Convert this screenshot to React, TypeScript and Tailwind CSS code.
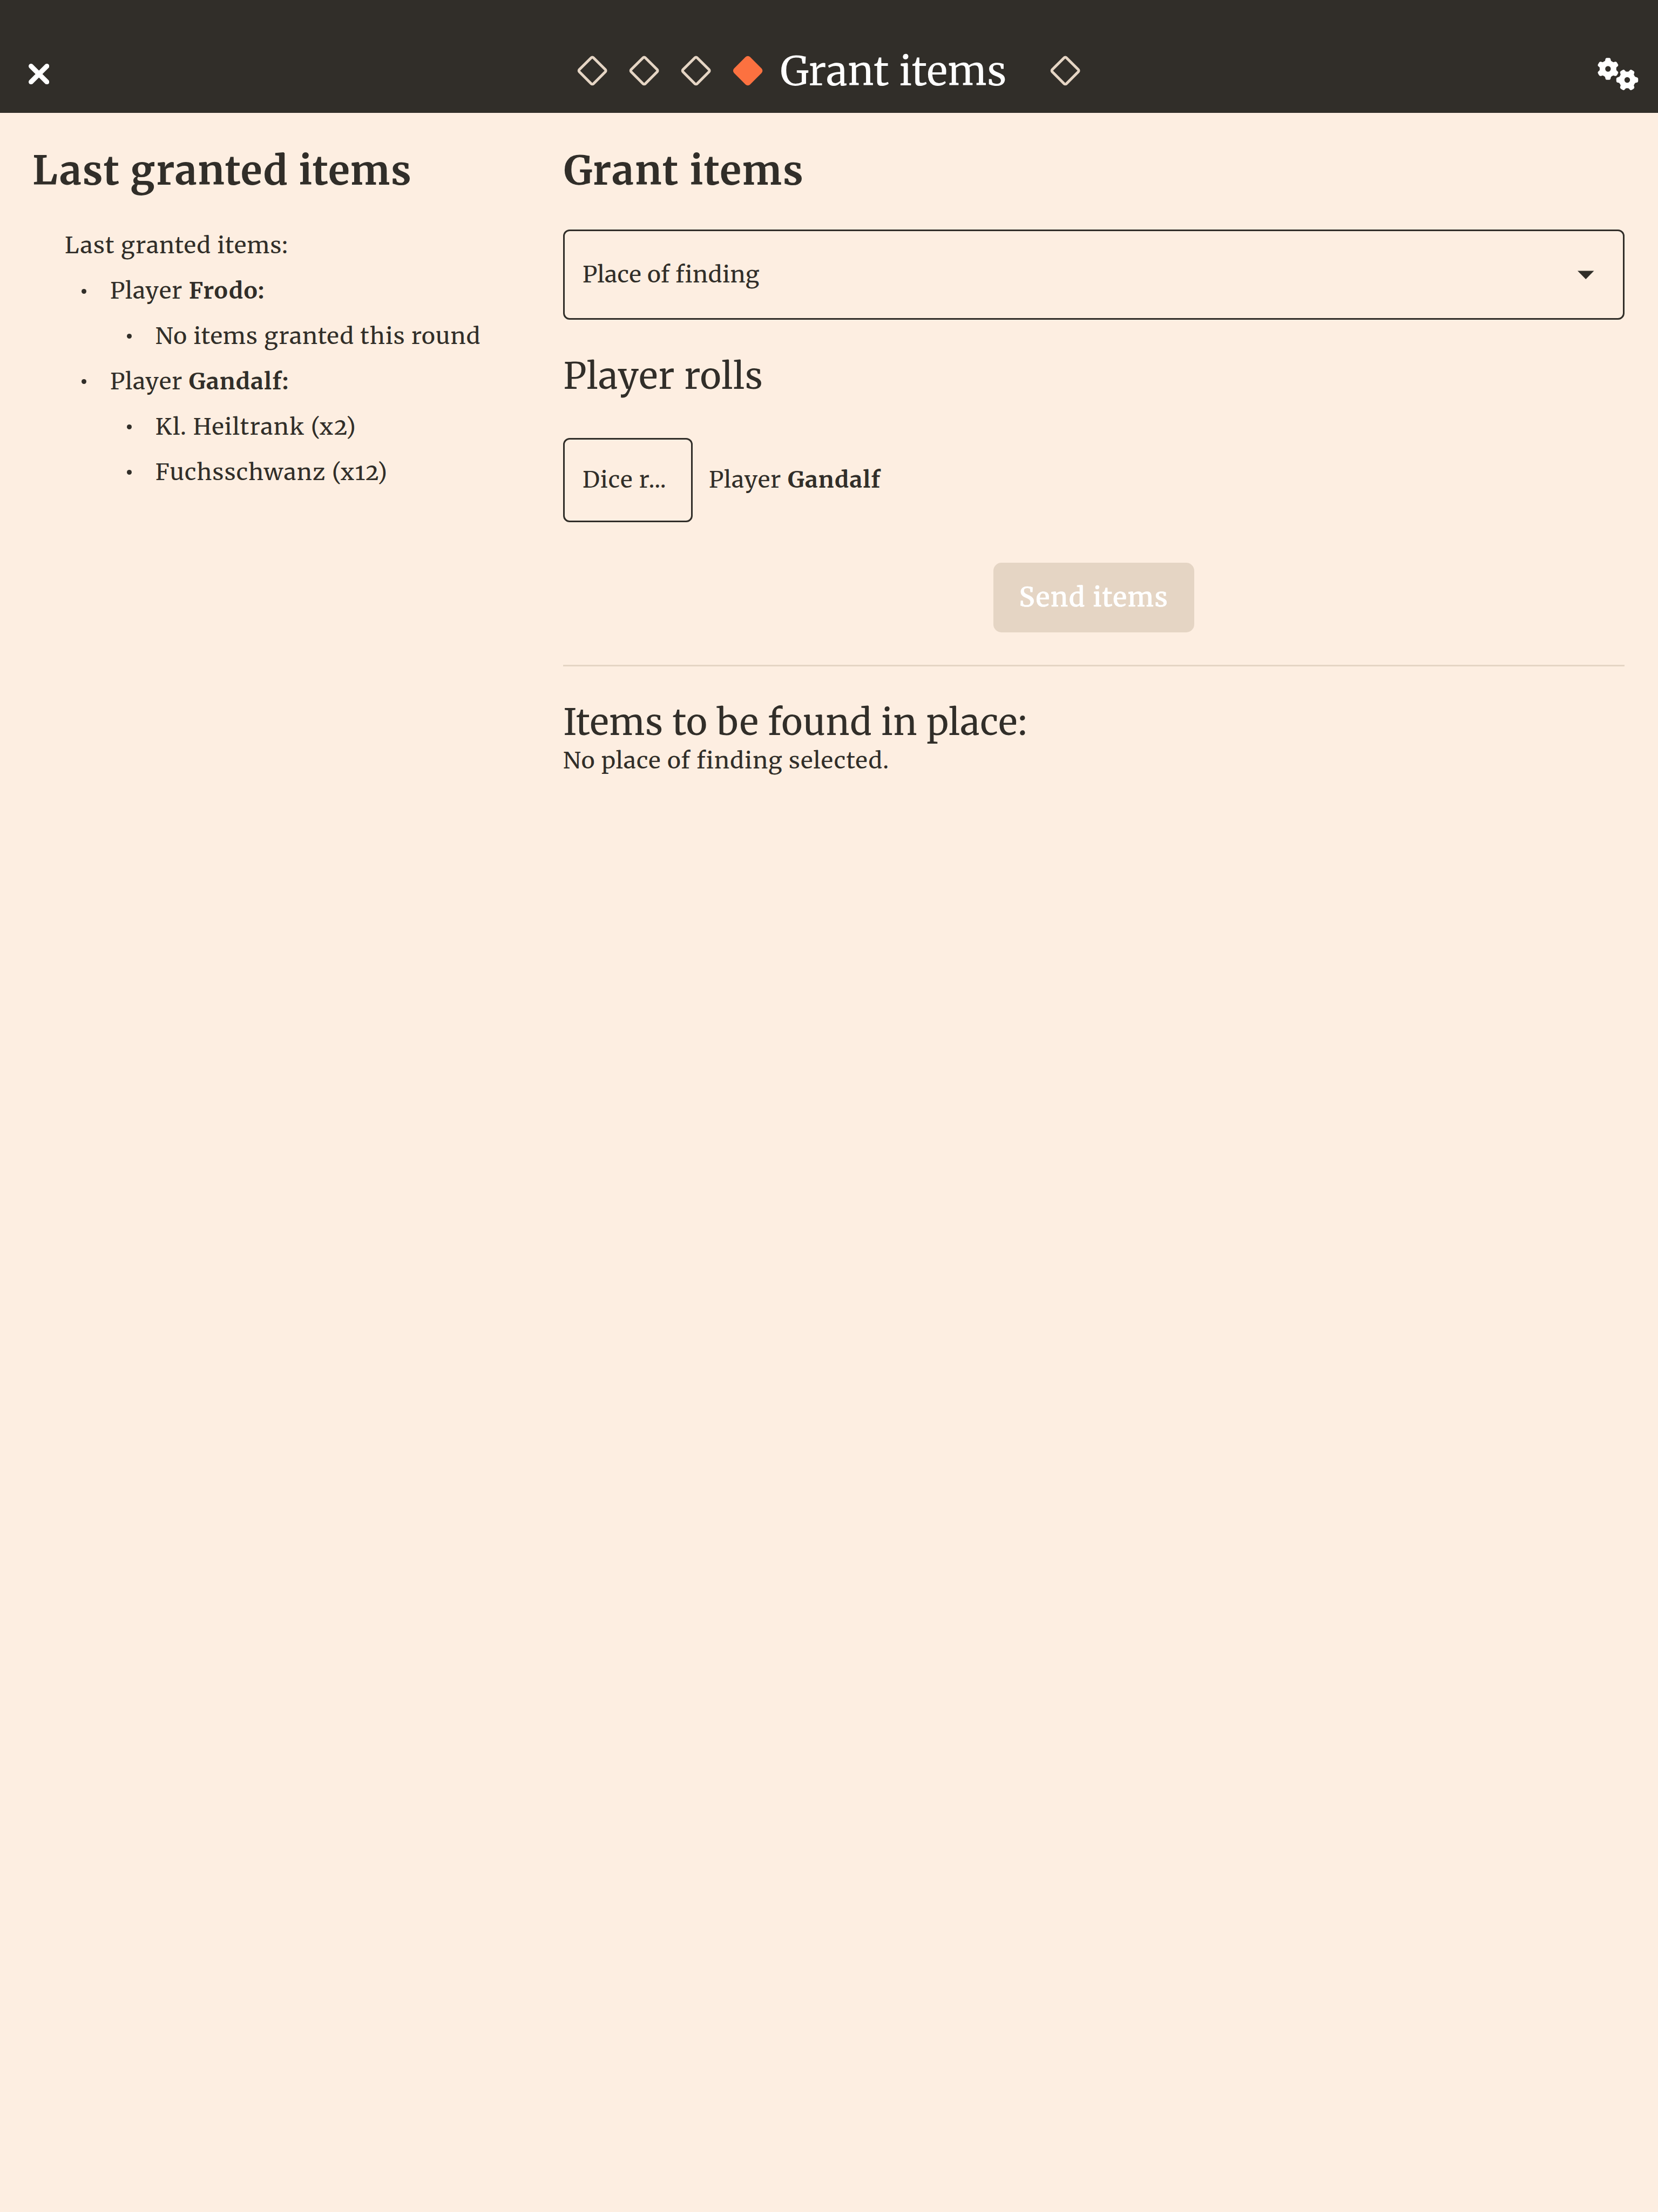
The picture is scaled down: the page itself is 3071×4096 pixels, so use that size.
const SERIF = "font-['Merriweather','DejaVu_Serif',serif]";

function point(radius: number, degrees: number) {
  const a = (degrees * Math.PI) / 180;
  return `${(radius * Math.cos(a)).toFixed(2)} ${(radius * Math.sin(a)).toFixed(2)}`;
}

function gearPath(start: number) {
  let d = '';
  for (let i = 0; i < 6; i++) {
    const a = start + i * 60;
    d += `${i ? 'L' : 'M'}${point(15.7, a - 21)}`;
    d += `Q${point(16.4, a - 18.5)} ${point(17.8, a - 16.5)}`;
    d += `Q${point(20.2, a - 14)} ${point(20.3, a - 7.5)}`;
    d += `Q${point(20.4, a)} ${point(20.3, a + 7.5)}`;
    d += `Q${point(20.2, a + 14)} ${point(17.8, a + 16.5)}`;
    d += `Q${point(16.4, a + 18.5)} ${point(15.7, a + 21)}`;
    d += `Q${point(15.2, a + 30)} ${point(15.7, a + 39)}`;
  }
  return `${d}Z M5.2 0A5.2 5.2 0 1 0 -5.2 0A5.2 5.2 0 1 0 5.2 0Z`;
}

function GearsIcon() {
  return (
    <svg width="76" height="61" viewBox="0 0 76 61" fill="currentColor" fillRule="evenodd">
      <path transform="translate(19.4 20.5)" d={gearPath(-90)} />
      <path transform="translate(55 41)" d={gearPath(0)} />
    </svg>
  );
}

function CloseIcon() {
  return (
    <svg width="38.3" height="38.3" viewBox="0 0 38.3 38.3" stroke="currentColor" strokeWidth="9" strokeLinecap="round">
      <path d="M4.5 4.5L33.8 33.8M33.8 4.5L4.5 33.8" />
    </svg>
  );
}

function Step({ active = false }: { active?: boolean }) {
  return (
    <span className="flex w-[95.9px] justify-center">
      <span
        className={
          active
            ? 'size-[42.3px] rotate-45 rounded-[6px] bg-[#fc7140]'
            : 'size-[42.3px] rotate-45 rounded-[5.5px] border-[5px] border-[#e5d5c4]'
        }
      />
    </span>
  );
}

function Bullet() {
  return (
    <span className="flex w-[83.9px] shrink-0 pl-[31px]">
      <span className="size-[9px] rounded-full bg-[#312e29]" />
    </span>
  );
}

function Header() {
  return (
    <header className="grid h-[209px] grid-cols-[1049.4px_1fr_auto] items-center bg-[#312e29] pt-[53.6px] text-white">
      <div className="pt-[12px] pl-[52.9px]">
        <CloseIcon />
      </div>
      <div className="flex items-center">
        <Step />
        <Step />
        <Step />
        <Step active />
        <h1 className="w-[492.6px] pt-[1.6px] pl-[12.2px] text-[73px] leading-[96px] tracking-[0.74px]">Grant items</h1>
        <Step />
      </div>
      <div className="pt-[12px] pr-[36px]">
        <GearsIcon />
      </div>
    </header>
  );
}

const players = [
  { name: 'Frodo', items: ['No items granted this round'] },
  { name: 'Gandalf', items: ['Kl. Heiltrank (x2)', 'Fuchsschwanz (x12)'] },
];

function Sidebar() {
  return (
    <aside className="w-[1043px] shrink-0 pl-[60px]">
      <h2 className="mt-[56.6px] text-[73px] leading-[100px] font-bold tracking-[1.55px]">Last granted items</h2>
      <div className="mt-[47.6px] pl-[60px] leading-[83.9px]">
        <p>Last granted items:</p>
        <ul>
          {players.map((player) => (
            <li key={player.name}>
              <div className="flex items-center">
                <Bullet />
                <span>
                  Player <b>{player.name}:</b>
                </span>
              </div>
              <ul className="pl-[83.9px]">
                {player.items.map((item) => (
                  <li key={item} className="flex items-center">
                    <Bullet />
                    <span className={/\d/.test(item) ? 'tracking-[1.35px]' : 'tracking-[1.15px]'}>{item}</span>
                  </li>
                ))}
              </ul>
            </li>
          ))}
        </ul>
      </div>
    </aside>
  );
}

export default function App() {
  return (
    <div
      className={`${SERIF} h-[4096px] w-[3071px] overflow-hidden bg-[#fdeee1] text-[42.4px] tracking-[1.22px] text-[#312e29] [font-feature-settings:'onum']`}
    >
      <Header />
      <div className="flex">
        <Sidebar />
        <main className="w-[1966px]">
          <h2 className="mt-[56.6px] pl-px text-[73px] leading-[100px] font-bold tracking-[2px]">Grant items</h2>
          <div className="mt-[59px] flex h-[167.8px] items-center justify-between rounded-[12px] border-[3px] border-[#312e29] pr-[53.5px] pl-[33px]">
            <span className="tracking-[0.65px]">Place of finding</span>
            <svg className="mt-[2px]" width="30.5" height="16" viewBox="0 0 30.5 16" fill="currentColor">
              <path d="M0 0.4H30.5L15.25 16Z" />
            </svg>
          </div>
          <h3 className="mt-[63.2px] pl-[0.5px] text-[66.6px] leading-[80px] tracking-[1.18px]">Player rolls</h3>
          <div className="mt-[75.6px] flex items-center gap-[30px]">
            <div className="flex h-[155.8px] w-[240px] items-center rounded-[12px] border-[3px] border-[#312e29] pl-[33px]">
              Dice r...
            </div>
            <span>
              Player <b>Gandalf</b>
            </span>
          </div>
          <div className="mt-[75px] flex justify-center">
            <button className="h-[129px] w-[371.6px] rounded-[15px] bg-[#e5d5c4] text-[48.4px] font-medium tracking-[1.9px] text-white [-webkit-text-stroke:0.7px_white]">
              Send items
            </button>
          </div>
          <hr className="mt-[60px] h-[3px] border-0 bg-[#e5d5c4]" />
          <h3 className="mt-[62.8px] pl-[0.5px] text-[66.6px] leading-[80px] tracking-[0.88px]">Items to be found in place:</h3>
          <p className="leading-[62.8px]">No place of finding selected.</p>
        </main>
      </div>
    </div>
  );
}
